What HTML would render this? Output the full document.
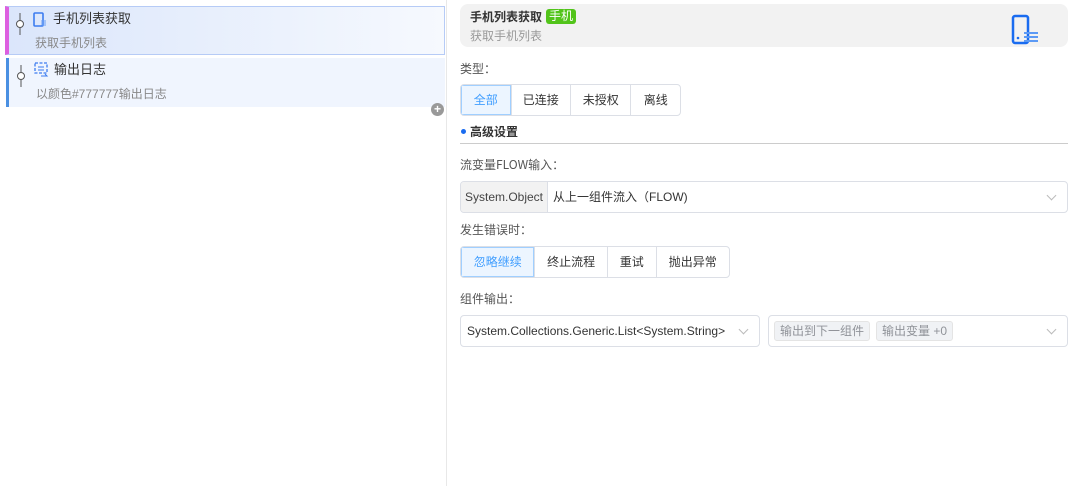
<!DOCTYPE html>
<html><head><meta charset="utf-8"><style>
*{box-sizing:border-box;margin:0;padding:0}
body{width:1079px;height:486px;background:#fff;font-family:"Liberation Sans","Noto Sans CJK SC",sans-serif;position:relative;overflow:hidden;color:#333;line-height:16px}
.a{position:absolute}
.left{left:0;top:0;width:447px;height:486px;border-right:1px solid #e8e8e8}
.item{position:absolute;left:5px;width:440px;height:49px}
.t{position:absolute;top:4px;font-size:13px;color:#333}
.d{position:absolute;top:28px;font-size:12px;color:#888}
.lbl{font-size:12px;color:#555;position:absolute;left:460px;font-family:"Noto Sans CJK SC",sans-serif}
.bg{position:absolute;display:flex;height:32px;border:1px solid #dcdfe6;border-radius:4px;overflow:hidden}
.bg div{font-size:12px;color:#333;display:flex;align-items:center;justify-content:center;border-left:1px solid #dcdfe6;height:100%}
.bg div:first-child{border-left:none}
.bg .on{background:#ecf5ff;color:#409eff;box-shadow:inset 0 0 0 1px #a0cfff}
.sel{position:absolute;height:32px;border:1px solid #dcdfe6;border-radius:4px;font-size:12px;display:flex;align-items:center}
.arr{position:absolute;right:12px;top:10px;width:7px;height:7px;border-right:1px solid #bbb;border-bottom:1px solid #bbb;transform:rotate(45deg)}
.tag{font-size:12px;color:#909399;background:#f0f2f5;border:1px solid #e4e4e4;border-radius:3px;height:20px;padding:0 5px;display:flex;align-items:center;margin-right:6px}
</style></head><body>
<div class="a left"></div>
<div class="item" style="top:6px;background:linear-gradient(90deg,#dbe6fb,#f6f9fe);border:1px solid #b6cbf6;border-left:4px solid #dd5fe0">
 <svg class="a" style="left:6px;top:6px" width="10" height="22"><line x1="5" y1="0" x2="5" y2="22" stroke="#555"/><circle cx="5" cy="11" r="3.5" fill="#fff" stroke="#555"/></svg>
 <svg class="a" style="left:24px;top:5px" width="14" height="16"><rect x="1" y="1" width="9" height="13" rx="1" fill="none" stroke="#3c7cf0" stroke-width="1.6"/><line x1="8" y1="9" x2="13" y2="9" stroke="#6aa0f5"/><line x1="8" y1="11" x2="13" y2="11" stroke="#6aa0f5"/><line x1="8" y1="13" x2="13" y2="13" stroke="#6aa0f5"/></svg>
 <div class="t" style="left:44px">手机列表获取</div><div class="d" style="left:26px">获取手机列表</div>
</div>
<div class="item" style="top:58px;left:6px;width:439px;background:#f0f5fe;border-left:3px solid #4a90e2">
 <svg class="a" style="left:7px;top:7px" width="10" height="22"><line x1="5" y1="0" x2="5" y2="22" stroke="#555"/><circle cx="5" cy="11" r="3.5" fill="#fff" stroke="#555"/></svg>
 <svg class="a" style="left:24px;top:4px" width="16" height="16"><rect x="2" y="1" width="12" height="10" fill="none" stroke="#3c7cf0" stroke-width="1.3" stroke-dasharray="3 1.5"/><line x1="5" y1="5" x2="11" y2="5" stroke="#3c7cf0"/><line x1="5" y1="8" x2="11" y2="8" stroke="#3c7cf0"/><path d="M8 14h6l-2-2" fill="none" stroke="#3c7cf0"/></svg>
 <div class="t" style="left:45px">输出日志</div><div class="d" style="left:27px">以颜色#777777输出日志</div>
</div>
<div class="a" style="left:431px;top:103px;width:13px;height:13px;border-radius:50%;background:#999;color:#fff;font-size:12px;line-height:13px;text-align:center;font-weight:bold">+</div>

<div class="a" style="left:460px;top:4px;width:608px;height:43px;background:#f2f2f2;border-radius:8px">
 <div class="a" style="left:10px;top:5px;font-size:12px;font-weight:bold;color:#333">手机列表获取</div>
 <div class="a" style="left:86px;top:5px;height:15px;padding:0 3px;background:#52c41a;color:#fff;font-size:12px;line-height:15px;border-radius:3px">手机</div>
 <div class="a" style="left:10px;top:24px;font-size:12px;color:#999">获取手机列表</div>
 <svg class="a" style="left:550px;top:10px" width="30" height="32"><rect x="3" y="2" width="15" height="27" rx="2" fill="none" stroke="#1a6cf0" stroke-width="2.5"/><circle cx="8" cy="24" r="1.3" fill="#1a6cf0"/><rect x="14" y="18" width="14" height="2" fill="#5c9af5"/><rect x="14" y="22" width="14" height="2" fill="#5c9af5"/><rect x="14" y="26" width="14" height="2" fill="#5c9af5"/></svg>
</div>

<div class="lbl" style="top:61px">类型：</div>
<div class="bg" style="left:460px;top:84px;width:221px"><div class="on" style="width:50px">全部</div><div style="width:60px">已连接</div><div style="width:61px">未授权</div><div style="width:50px">离线</div></div>
<div class="a" style="left:461px;top:129px;width:5px;height:5px;border-radius:50%;background:#1a6cf0"></div>
<div class="a" style="left:470px;top:124px;font-size:12px;font-weight:bold;color:#333">高级设置</div>
<div class="a" style="left:460px;top:143px;width:608px;height:1px;background:#ccc"></div>

<div class="lbl" style="top:157px">流变量FLOW输入：</div>
<div class="sel" style="left:460px;top:181px;width:608px;overflow:hidden"><div style="width:87px;height:100%;background:#f2f2f2;border-right:1px solid #dcdfe6;display:flex;align-items:center;justify-content:center;color:#444">System.Object</div><span style="margin-left:5px">从上一组件流入（FLOW)</span><div class="arr"></div></div>

<div class="lbl" style="top:222px">发生错误时：</div>
<div class="bg" style="left:460px;top:246px;width:270px"><div class="on" style="width:74px">忽略继续</div><div style="width:73px">终止流程</div><div style="width:49px">重试</div><div style="width:74px">抛出异常</div></div>

<div class="lbl" style="top:291px">组件输出：</div>
<div class="sel" style="left:460px;top:315px;width:300px;padding-left:6px;color:#333">System.Collections.Generic.List&lt;System.String&gt;<div class="arr"></div></div>
<div class="sel" style="left:768px;top:315px;width:300px;padding-left:5px"><div class="tag">输出到下一组件</div><div class="tag">输出变量 +0</div><div class="arr"></div></div>
</body></html>
